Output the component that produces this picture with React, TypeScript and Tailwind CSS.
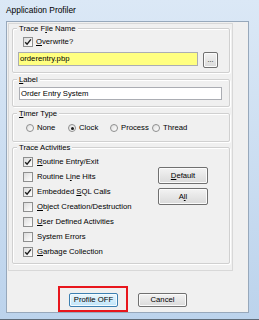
import React from 'react';

type Kids = { children?: React.ReactNode };

const Check = ({ checked }: { checked?: boolean }) => (
  <span className="w-[10px] h-[10px] shrink-0 border border-[#8e8f8f] bg-linear-to-br from-[#dcdcdc] to-white flex items-center justify-center">
    {checked && (
      <svg width="8" height="8" viewBox="0 0 8 8">
        <path d="M1.2 4.2 L3.1 6.2 L6.9 1.4" stroke="#1c1c1c" strokeWidth="1.4" fill="none" />
      </svg>
    )}
  </span>
);

const Radio = ({ checked }: { checked?: boolean }) => (
  <span className="w-[8px] h-[8px] shrink-0 rounded-full border border-[#8e8f8f] bg-linear-to-br from-[#e0e0e0] to-white flex items-center justify-center">
    {checked && <span className="w-[3px] h-[3px] rounded-full bg-[#1c1c1c]" />}
  </span>
);

const U = ({ children }: Kids) => <span className="underline underline-offset-[1px]">{children}</span>;

const Group = ({ title, className, children }: Kids & { title: React.ReactNode; className: string }) => (
  <div className={`relative w-[218px] border border-[#d0d0d0] rounded-[2px] shadow-[inset_1px_1px_0_#fff,1px_1px_0_#fff] ${className}`}>
    <span className="absolute -top-[5px] left-[4px] px-[2px] leading-[9px] bg-[#f0f0f0]">{title}</span>
    {children}
  </div>
);

const Btn = ({ children, className = '' }: Kids & { className?: string }) => (
  <button className={`border border-[#707070] rounded-[2px] bg-linear-to-b from-[#f3f3f3] to-[#dadada] shadow-[inset_0_0_0_1px_#fbfbfb] flex items-center justify-center leading-none ${className}`}>
    {children}
  </button>
);

const activities: [React.ReactNode, boolean][] = [
  [<><U>R</U>outine Entry/Exit</>, true],
  [<>Routine L<U>i</U>ne Hits</>, false],
  [<>Embedded <U>S</U>QL Calls</>, true],
  [<><U>O</U>bject Creation/Destruction</>, false],
  [<><U>U</U>ser Defined Activities</>, false],
  [<>System Errors</>, false],
  [<><U>G</U>arbage Collection</>, true],
];

const timers = ['None', 'Clock', 'Process', 'Thread'];

export default function App() {
  return (
    <div className="w-[259px] h-[320px] flex flex-col bg-linear-to-b from-[#dbe8f6] to-[#bcd3ec] border-b border-[#5f6b78] text-black text-[7.7px] font-['Liberation_Sans',Arial,sans-serif]">
      {/* title bar */}
      <div className="h-[21px] shrink-0 flex items-center pl-[6px] pb-[1px] text-[8.4px]">Application Profiler</div>

      <div className="flex-1 flex pl-[6px] pr-[10px] pb-[6px]">
        {/* client area */}
        <div className="flex-1 flex flex-col border border-[#97a8bb] bg-[#f0f0f0]">
          <div className="ml-[1px] mt-[1px] w-[225px] h-[248px] border border-[#d8d8d8] pl-[3px] pt-[4px] flex flex-col">
            <Group title={<>Trace F<U>i</U>le Name</>} className="h-[45px] pt-[8px] pl-[5px]">
              <div className="flex items-center gap-[3px] pl-[5px] h-[10px]">
                <Check checked />
                <span><U>O</U>verwrite?</span>
              </div>
              <div className="flex items-start gap-[5px] mt-[5px]">
                <div className="w-[180px] h-[14px] border border-[#abadb3] bg-[#ffff80] pl-[1px] flex items-center">orderentry.pbp</div>
                <Btn className="w-[15px] h-[16px] text-[7px] pb-[2px]">...</Btn>
              </div>
            </Group>

            <Group title={<><U>L</U>abel</>} className="h-[28px] mt-[6px] pt-[7px] pl-[6px]">
              <div className="w-[203px] h-[13px] border border-[#abadb3] bg-white pl-[1px] flex items-center">Order Entry System</div>
            </Group>

            <Group title={<><U>T</U>imer Type</>} className="h-[29px] mt-[6px] pt-[10px] pl-[13px]">
              <div className="flex">
                {timers.map((t) => (
                  <div key={t} className="w-[42px] flex items-center gap-[3px] h-[8px]">
                    <Radio checked={t === 'Clock'} />
                    <span>{t}</span>
                  </div>
                ))}
              </div>
            </Group>

            <Group title="Trace Activities" className="h-[117px] mt-[5px] pt-[9px] pl-[10px]">
              <div className="flex">
                <div className="w-[135px] flex flex-col gap-[5px]">
                  {activities.map(([label, on], i) => (
                    <div key={i} className="flex items-center gap-[4px] h-[10px]">
                      <Check checked={on} />
                      <span className="whitespace-nowrap">{label}</span>
                    </div>
                  ))}
                </div>
                <div className="flex flex-col gap-[4px] mt-[10px]">
                  <Btn className="w-[50px] h-[17px]"><U>D</U>efault</Btn>
                  <Btn className="w-[50px] h-[17px]">A<U>l</U>l</Btn>
                </div>
              </div>
            </Group>
          </div>

          {/* bottom buttons */}
          <div className="flex items-start mt-[15px] ml-[51px]">
            <div className="border-2 border-[#e8161c] pt-[5px] pb-[3px] pl-[9px] pr-[8px]">
              <button className="w-[49px] h-[14px] border border-[#3c7fb1] rounded-[2px] bg-linear-to-b from-[#eaf6fd] to-[#bfe4f9] shadow-[inset_0_0_0_1px_#f4fbff] flex items-center justify-center leading-none">
                Profile OFF
              </button>
            </div>
            <Btn className="w-[49px] h-[14px] ml-[10px] mt-[7px]">Cancel</Btn>
          </div>
        </div>
      </div>
    </div>
  );
}
